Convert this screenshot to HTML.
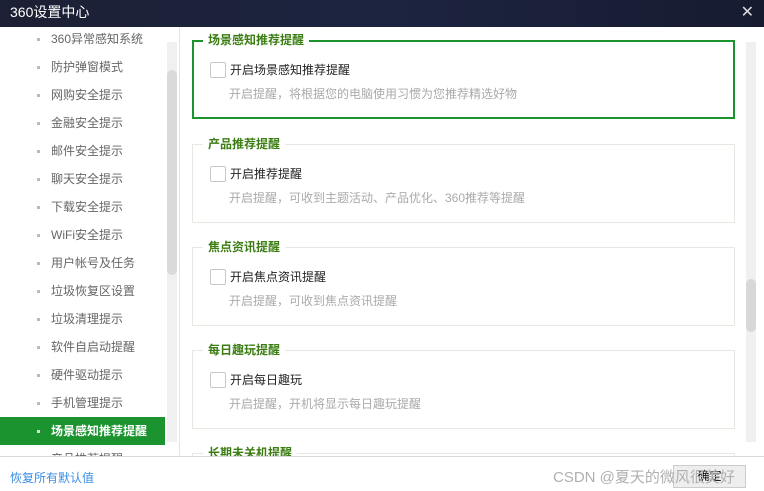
<!DOCTYPE html>
<html><head><meta charset="utf-8"><style>
*{margin:0;padding:0;box-sizing:border-box}
html,body{width:764px;height:491px;overflow:hidden}
body{background:#fff;font-family:"Liberation Sans","Noto Sans CJK SC",sans-serif;font-size:12px;position:relative}
.title{position:absolute;left:0;top:0;width:764px;height:27px;background:linear-gradient(90deg,#1b2034,#1d2440 50%,#161b30);color:#fff;font-size:14px;line-height:25px;padding-left:10px}
.title .x{position:absolute;right:10px;top:0;font-size:16px;color:#ddd}
.side{position:absolute;left:0;top:27px;width:180px;height:429px;overflow:hidden;border-right:1px solid #e4e4e4}
.it{position:absolute;left:0;width:165px;height:28px;line-height:28px;padding-left:51px;color:#666;font-size:12px}
.it::before{content:"";position:absolute;left:37px;top:13px;width:3px;height:3px;background:#bbb}
.it.a{background:#1b9430;color:#fff;font-weight:bold}
.it.a::before{background:#ddd}
.strack{position:absolute;left:167px;top:15px;width:10px;height:400px;background:#f0f0f0}
.sthumb{position:absolute;left:167px;top:43px;width:10px;height:205px;background:#dadada;border-radius:5px}
.main{position:absolute;left:181px;top:27px;width:583px;height:429px;overflow:hidden}
.g{position:absolute;left:11px;width:543px;height:79px;border:1px solid #e8e8e2}
.g.on{border:2px solid #1b9430;height:79px}
.gt{position:absolute;left:10px;top:-9px;background:#fff;padding:0 5px;color:#3b7d12;font-weight:bold;font-size:12px;line-height:16px}
.cb{position:absolute;left:17px;top:21px;width:16px;height:16px;border:1px solid #c8c8c8;border-radius:2px;background:#fff}
.lb{position:absolute;left:37px;top:20px;color:#222;font-size:12px;line-height:18px}
.ds{position:absolute;left:36px;top:44px;color:#aaa;font-size:12px;line-height:18px}
.on .cb{left:16px;top:20px}.on .lb{left:36px;top:19px}.on .ds{left:35px;top:43px}.on .gt{left:9px;top:-10px}
.rtrack{position:absolute;left:565px;top:15px;width:10px;height:400px;background:#f0f0f0}
.rthumb{position:absolute;left:565px;top:252px;width:10px;height:53px;background:#d8d8d8;border-radius:5px}
.foot{position:absolute;left:0;top:456px;width:764px;height:35px;border-top:1px solid #d8d8d8;background:#fff;overflow:hidden}
.rst{position:absolute;left:10px;top:12px;color:#3a8ee6;font-size:12px}
.btn{position:absolute;left:673px;top:8px;width:73px;height:23px;border:1px solid #ccc;background:#eee;font-size:12px;line-height:21px;text-align:center;color:#000}
.wm{position:absolute;left:553px;top:9px;color:#b0b0b0;font-size:15px;white-space:nowrap}
</style></head><body>
<div class="title">360设置中心<span class="x">✕</span></div>
<div class="side">
<div class="it" style="top:-2px">360异常感知系统</div>
<div class="it" style="top:26px">防护弹窗模式</div>
<div class="it" style="top:54px">网购安全提示</div>
<div class="it" style="top:82px">金融安全提示</div>
<div class="it" style="top:110px">邮件安全提示</div>
<div class="it" style="top:138px">聊天安全提示</div>
<div class="it" style="top:166px">下载安全提示</div>
<div class="it" style="top:194px">WiFi安全提示</div>
<div class="it" style="top:222px">用户帐号及任务</div>
<div class="it" style="top:250px">垃圾恢复区设置</div>
<div class="it" style="top:278px">垃圾清理提示</div>
<div class="it" style="top:306px">软件自启动提醒</div>
<div class="it" style="top:334px">硬件驱动提示</div>
<div class="it" style="top:362px">手机管理提示</div>
<div class="it a" style="top:390px">场景感知推荐提醒</div>
<div class="it" style="top:418px">产品推荐提醒</div>
<div class="strack"></div><div class="sthumb"></div>
</div>
<div class="main">
<div class="g on" style="top:13px"><div class="gt">场景感知推荐提醒</div><div class="cb"></div><div class="lb">开启场景感知推荐提醒</div><div class="ds">开启提醒，将根据您的电脑使用习惯为您推荐精选好物</div></div>
<div class="g" style="top:117px"><div class="gt">产品推荐提醒</div><div class="cb"></div><div class="lb">开启推荐提醒</div><div class="ds">开启提醒，可收到主题活动、产品优化、360推荐等提醒</div></div>
<div class="g" style="top:220px"><div class="gt">焦点资讯提醒</div><div class="cb"></div><div class="lb">开启焦点资讯提醒</div><div class="ds">开启提醒，可收到焦点资讯提醒</div></div>
<div class="g" style="top:323px"><div class="gt">每日趣玩提醒</div><div class="cb"></div><div class="lb">开启每日趣玩</div><div class="ds">开启提醒，开机将显示每日趣玩提醒</div></div>
<div class="g" style="top:426px"><div class="gt">长期未关机提醒</div></div>
<div class="rtrack"></div><div class="rthumb"></div>
</div>
<div class="foot"><div class="rst">恢复所有默认值</div><div class="btn">确定</div><div class="wm">CSDN @夏天的微风很美好</div></div>
</body></html>
